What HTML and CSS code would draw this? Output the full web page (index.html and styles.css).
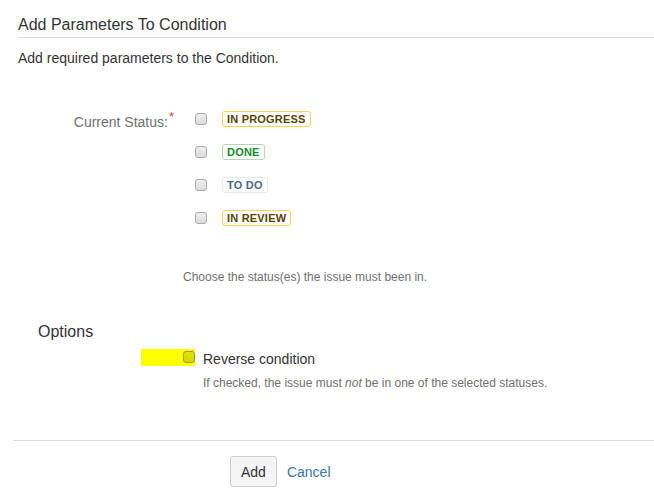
FILE: index.html
```html
<!DOCTYPE html>
<html>
<head>
<meta charset="utf-8">
<link rel="stylesheet" href="styles.css">
</head>
<body>
<div class="page">
  <h2 class="title">Add Parameters To Condition</h2>
  <p class="desc">Add required parameters to the Condition.</p>

  <div class="field">
    <div class="label">Current Status:<span class="req">*</span></div>
    <div class="options">
      <div class="opt"><input type="checkbox" class="cb"><span class="loz loz-prog">IN PROGRESS</span></div>
      <div class="opt"><input type="checkbox" class="cb"><span class="loz loz-done">DONE</span></div>
      <div class="opt"><input type="checkbox" class="cb"><span class="loz loz-todo">TO DO</span></div>
      <div class="opt"><input type="checkbox" class="cb"><span class="loz loz-prog">IN REVIEW</span></div>
    </div>
  </div>
  <div class="hint hint-status">Choose the status(es) the issue must been in.</div>

  <h3 class="opts-title">Options</h3>
  <div class="reverse">
    <span class="mark"><input type="checkbox" class="cb cb-mark"></span>
    <span class="rev-label">Reverse condition</span>
  </div>
  <div class="hint hint-rev">If checked, the issue must <em>not</em> be in one of the selected statuses.</div>

  <div class="footer">
    <button class="btn">Add</button>
    <a class="cancel" href="#">Cancel</a>
  </div>
</div>
</body>
</html>
```

FILE: styles.css
```css
html, body {
  margin: 0;
  padding: 0;
  background: #fff;
}
body {
  font-family: "Liberation Sans", Arial, sans-serif;
  color: #333;
  font-size: 14px;
}
.page {
  width: 654px;
}
.title {
  margin: 0 0 0 18px;
  padding: 15px 0 2px 0;
  font-size: 16px;
  line-height: 20px;
  font-weight: normal;
  color: #333;
  border-bottom: 1px solid #dddddd;
}
.desc {
  margin: 10px 0 0 18px;
  line-height: 20px;
  font-size: 14px;
}
.field {
  display: flex;
  margin-top: 34px;
}
.label {
  width: 173px;
  text-align: right;
  color: #707070;
  font-size: 14px;
  line-height: 20px;
  padding-top: 10px;
  position: relative;
}
.req {
  color: #d04437;
  font-size: 13px;
  position: relative;
  top: -6px;
  left: 1px;
}
.options {
  display: flex;
  flex-direction: column;
  margin-left: 22px;
}
.opt {
  height: 33px;
  display: flex;
  align-items: center;
}
.cb {
  appearance: none;
  -webkit-appearance: none;
  margin: 0;
  width: 12px;
  height: 12px;
  border: 1px solid #a9a9a9;
  border-radius: 3px;
  background: linear-gradient(#eeeeee, #dcdcdc);
  box-sizing: border-box;
  flex: none;
}
.loz {
  margin-left: 15px;
  margin-top: 1px;
  display: inline-block;
  box-sizing: border-box;
  height: 16px;
  line-height: 14px;
  padding: 0 4px;
  border: 1px solid;
  border-radius: 3px;
  font-size: 11px;
  font-weight: bold;
  letter-spacing: 0.2px;
  background: #fff;
}
.loz-prog {
  border-color: #ffd351;
  color: #594300;
}
.loz-done {
  border-color: #b2d8b9;
  color: #14892c;
}
.loz-todo {
  border-color: #e4e8ed;
  color: #4a6785;
}
.hint {
  font-size: 12px;
  line-height: 16px;
  color: #707070;
}
.hint-status {
  margin: 35px 0 0 183px;
}
.opts-title {
  margin: 37px 0 0 38px;
  font-size: 16px;
  line-height: 20px;
  font-weight: normal;
  color: #333;
}
.reverse {
  display: flex;
  align-items: flex-start;
  margin: 7px 0 0 141px;
  height: 18px;
}
.mark {
  display: flex;
  justify-content: flex-end;
  width: 54px;
  height: 17px;
  background: #ffff00;
}
.cb-mark {
  margin-top: 2px;
  border-color: #9a9a30;
  background: linear-gradient(#e4e400, #d6d600);
}
.rev-label {
  margin-left: 8px;
  line-height: 20px;
  font-size: 14px;
  color: #333;
}
.hint-rev {
  margin: 8px 0 0 203px;
}
.footer {
  margin: 49px 0 0 13px;
  border-top: 1px solid #dddddd;
  padding: 15px 0 0 217px;
  display: flex;
  align-items: center;
}
.btn {
  height: 31px;
  padding: 0 10px;
  border: 1px solid #cccccc;
  border-radius: 3px;
  background: #f5f5f5;
  font-family: "Liberation Sans", Arial, sans-serif;
  font-size: 14px;
  color: #333;
}
.cancel {
  margin-left: 10px;
  color: #3b73af;
  text-decoration: none;
  font-size: 14px;
}
```
